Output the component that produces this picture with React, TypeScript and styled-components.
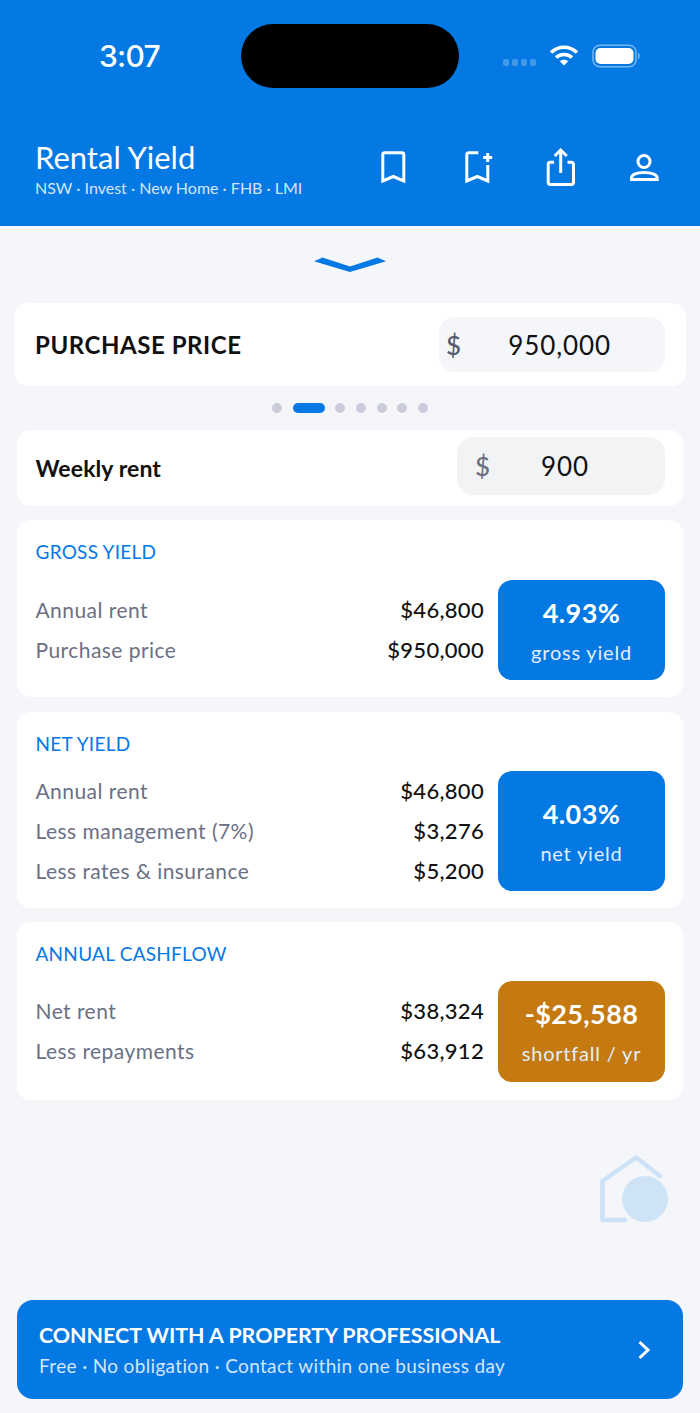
import React from "react";
import styled, { createGlobalStyle } from "styled-components";

const Global = createGlobalStyle`
  html, body { margin: 0; padding: 0; background: #f4f6fa; }
  body { font-family: "Lato", "Liberation Sans", sans-serif; }
  * { box-sizing: border-box; }
`;

const Page = styled.div`
  width: 700px;
  height: 1413px;
  background: #f4f6fa;
  display: flex;
  flex-direction: column;
  overflow: hidden;
`;
const Header = styled.header`
  height: 226px;
  flex: none;
  background: #0478e3;
  color: #fff;
  display: flex;
  flex-direction: column;
`;
const StatusBar = styled.div`
  height: 128px;
  padding: 24px 60px 0 99px;
  display: flex;
  align-items: flex-start;
`;
const Time = styled.div`
  width: 142px;
  height: 64px;
  line-height: 65px;
  font-size: 30px;
  font-weight: 500;
  font-family: "Inter", sans-serif;
  letter-spacing: -0.7px;
`;
const Island = styled.div`
  width: 218px;
  height: 64px;
  border-radius: 32px;
  background: #000;
`;
const StatusIcons = styled.div`
  margin-left: auto;
  height: 64px;
  display: flex;
  align-items: center;
  padding-bottom: 1px;
`;
const Signal = styled.div`
  display: flex;
  gap: 3px;
  margin: 14px 12px 0 0;
`;
const SignalDot = styled.span`
  width: 6px;
  height: 7px;
  border-radius: 2px;
  background: rgba(255, 255, 255, 0.25);
`;
const WifiSlot = styled.div`
  display: flex;
  margin-right: 12px;
`;
const TitleRow = styled.div`
  display: flex;
  align-items: flex-start;
  padding: 12px 41px 0 35px;
`;
const TitleBlock = styled.div`
  flex: 1;
`;
const Title = styled.div`
  font-size: 31px;
  line-height: 34px;
  font-weight: 400;
`;
const Subtitle = styled.div`
  font-size: 16px;
  line-height: 20px;
  margin-top: 4px;
  color: #d3e6fa;
`;
const Actions = styled.div`
  display: flex;
  gap: 53px;
  margin-top: 8px;
  align-items: flex-start;
`;
const ChevronWrap = styled.div`
  height: 77px;
  flex: none;
  display: flex;
  justify-content: center;
  padding-top: 31px;
`;
const Content = styled.main`
  display: flex;
  flex-direction: column;
  flex: 1;
`;
const PriceCard = styled.section`
  margin: 0 14px;
  height: 83px;
  background: #fff;
  border-radius: 14px;
  display: flex;
  align-items: center;
  padding: 0 21px;
`;
const PriceLabel = styled.div`
  flex: 1;
  font-size: 24px;
  font-weight: 700;
  color: #111;
  letter-spacing: 0.55px;
`;
const PriceInput = styled.div`
  width: 226px;
  height: 55px;
  border-radius: 16px;
  background: #f4f6fa;
  display: flex;
  align-items: center;
  padding: 0 54px 0 7px;
  font-size: 26px;
  color: #111;
`;
const Currency = styled.span<{ $color: string }>`
  color: ${(p) => p.$color};
  font-weight: 500;
`;
const InputValue = styled.span`
  margin-left: auto;
  letter-spacing: 0.9px;
`;
const Dots = styled.div`
  height: 44px;
  display: flex;
  align-items: center;
  justify-content: center;
  gap: 10.7px;
`;
const Dot = styled.span<{ $active?: boolean }>`
  width: ${(p) => (p.$active ? 32 : 10)}px;
  height: 10px;
  border-radius: 5px;
  background: ${(p) => (p.$active ? "#0478e3" : "#cbcbdc")};
`;
const Stack = styled.div`
  display: flex;
  flex-direction: column;
  margin: 0 17px;
`;
const RentCard = styled.section`
  height: 76px;
  background: #fff;
  border-radius: 14px;
  display: flex;
  align-items: flex-start;
  padding: 7px 18px 0 18.5px;
  margin-bottom: 14px;
`;
const RentLabel = styled.div`
  flex: 1;
  font-size: 23px;
  line-height: 63px;
  font-weight: 700;
  color: #111;
  letter-spacing: 0.1px;
`;
const RentInput = styled.div`
  width: 208px;
  height: 58px;
  background: #f2f3f4;
  border-radius: 16px;
  display: flex;
  align-items: center;
  padding: 0 76px 1px 18px;
  font-size: 26px;
  color: #111;
`;
const Card = styled.section<{ $height: number; $gap: number }>`
  height: ${(p) => p.$height}px;
  margin-bottom: ${(p) => p.$gap}px;
  background: #fff;
  border-radius: 14px;
  padding: 20px 18px 0 18.5px;
`;
const CardTitle = styled.div`
  font-size: 19px;
  line-height: 24px;
  color: #0478e3;
  letter-spacing: 0.25px;
`;
const CardBody = styled.div<{ $top: number }>`
  margin-top: ${(p) => p.$top}px;
  display: flex;
  align-items: flex-start;
  gap: 14px;
`;
const Rows = styled.div<{ $pad: number }>`
  flex: 1;
  padding-top: ${(p) => p.$pad}px;
  display: flex;
  flex-direction: column;
  gap: 10px;
`;
const Row = styled.div`
  height: 30px;
  display: flex;
  justify-content: space-between;
  align-items: center;
  font-size: 21px;
`;
const RowLabel = styled.span`
  color: #6b7085;
  letter-spacing: 0.45px;
`;
const RowValue = styled.span`
  color: #111;
  font-size: 22px;
  font-weight: 500;
  letter-spacing: 0.3px;
`;
const Result = styled.div<{ $height: number; $bg: string }>`
  width: 167px;
  height: ${(p) => p.$height}px;
  flex: none;
  border-radius: 14px;
  background: ${(p) => p.$bg};
  color: #fff;
  display: flex;
  flex-direction: column;
  align-items: center;
  justify-content: center;
  gap: 9px;
`;
const ResultValue = styled.div`
  font-size: 27px;
  line-height: 34px;
  font-weight: 700;
  letter-spacing: 0.4px;
`;
const ResultCaption = styled.div`
  font-size: 20px;
  line-height: 26px;
  color: #e2eefb;
  letter-spacing: 0.8px;
`;
const MarkWrap = styled.div`
  margin: 55px 32px 0 auto;
  width: 68px;
  height: 68px;
`;
const Cta = styled.section`
  margin: auto 17px 14px;
  height: 99px;
  border-radius: 16px;
  background: #0478e3;
  color: #fff;
  display: flex;
  align-items: center;
  padding: 0 32px 0 22px;
`;
const CtaText = styled.div`
  flex: 1;
`;
const CtaTitle = styled.div`
  font-size: 21.4px;
  line-height: 28px;
  font-weight: 700;
`;
const CtaSub = styled.div`
  margin-top: 5px;
  font-size: 19px;
  line-height: 24px;
  color: #d3e6fa;
  letter-spacing: 0.35px;
`;

const Wifi = () => (
  <svg width="32" height="24" viewBox="0 0 32 24" fill="none" stroke="#fff" strokeWidth="3.6">
    <path d="M3 8.5 C10.5 1.5 21.5 1.5 29 8.5" />
    <path d="M8 13.5 C12.5 9.5 19.5 9.5 24 13.5" />
    <path d="M16 21.5 L11.8 17.3 C14 15.3 18 15.3 20.2 17.3 Z" fill="#fff" stroke="none" />
  </svg>
);
const Battery = () => (
  <svg width="48" height="24" viewBox="0 0 48 24" fill="none">
    <rect x="1" y="1.2" width="43" height="21.6" rx="7" stroke="#fff" strokeOpacity=".45" strokeWidth="1.6" />
    <rect x="3.5" y="4" width="38" height="16" rx="5" fill="#fff" />
    <path d="M46 8.500 C47.200 9.500 47.800 10.500 47.800 12 C47.800 13.500 47.200 14.500 46 15.500 Z" fill="#fff" fillOpacity=".45" />
  </svg>
);
const iconProps = { fill: "none", stroke: "#fff", strokeWidth: 3 } as const;
const Bookmark = () => (
  <svg width="31" height="40" viewBox="0 0 31 40" {...iconProps}>
    <path d="M2.800 33 V6.500 C2.800 5.300 3.600 4.800 4.800 4.800 H21.800 C23 4.800 23.800 5.300 23.800 6.500 V33 L13.300 28.500 Z" />
  </svg>
);
const BookmarkPlus = () => (
  <svg width="29" height="40" viewBox="0 0 29 40" {...iconProps}>
    <path d="M14.300 4.800 H4.800 C3.600 4.800 2.800 5.300 2.800 6.500 V33 L13.300 28.500 L23.800 33 V17" />
    <path d="M23.700 5 V14 M19.200 9.500 H28.200" />
  </svg>
);
const Share = () => (
  <svg width="30" height="40" viewBox="0 0 30 40" {...iconProps}>
    <path d="M14.700 2 V25" />
    <path d="M8.700 8 L14.700 2 L20.700 8" />
    <path d="M8 14.300 H4.400 C3.100 14.300 2.200 15.200 2.200 16.500 V34.300 C2.200 35.600 3.100 36.500 4.400 36.500 H25.300 C26.600 36.500 27.500 35.600 27.500 34.300 V16.500 C27.500 15.200 26.600 14.300 25.300 14.300 H21.500" />
  </svg>
);
const Person = () => (
  <svg width="30" height="40" viewBox="0 0 30 40" {...iconProps}>
    <circle cx="15" cy="13.500" r="6" />
    <path d="M2.500 31.500 V30 C2.500 26.500 8 24.500 15 24.500 C22 24.500 28.200 26.500 28.200 30 V31.500 Z" />
  </svg>
);
const HouseMark = () => (
  <svg width="68" height="68" viewBox="0 0 68 68" fill="none">
    <path d="M25 65 H2.500 V26 L36 2.500 L60 21" stroke="#cde2f7" strokeWidth="4.500" strokeLinecap="round" strokeLinejoin="round" />
    <circle cx="45" cy="44" r="23" fill="#cfe3f7" />
  </svg>
);

type RowData = [string, string];

const YieldCard = ({
  title, rows, value, caption, height, gap, boxHeight, top, pad, bg,
}: {
  title: string; rows: RowData[]; value: string; caption: string; height: number;
  gap: number; boxHeight: number; top: number; pad: number; bg: string;
}) => (
  <Card $height={height} $gap={gap}>
    <CardTitle>{title}</CardTitle>
    <CardBody $top={top}>
      <Rows $pad={pad}>
        {rows.map(([l, v]) => (
          <Row key={l}>
            <RowLabel>{l}</RowLabel>
            <RowValue>{v}</RowValue>
          </Row>
        ))}
      </Rows>
      <Result $height={boxHeight} $bg={bg}>
        <ResultValue>{value}</ResultValue>
        <ResultCaption>{caption}</ResultCaption>
      </Result>
    </CardBody>
  </Card>
);

export default function App() {
  return (
    <Page>
      <Global />
      <Header>
        <StatusBar>
          <Time>3:07</Time>
          <Island />
          <StatusIcons>
            <Signal>
              {[0, 1, 2, 3].map((i) => <SignalDot key={i} />)}
            </Signal>
            <WifiSlot><Wifi /></WifiSlot>
            <Battery />
          </StatusIcons>
        </StatusBar>
        <TitleRow>
          <TitleBlock>
            <Title>Rental Yield</Title>
            <Subtitle>NSW · Invest · New Home · FHB · LMI</Subtitle>
          </TitleBlock>
          <Actions>
            <Bookmark />
            <BookmarkPlus />
            <Share />
            <Person />
          </Actions>
        </TitleRow>
      </Header>
      <ChevronWrap>
        <svg width="72" height="15" viewBox="0 0 72 15">
          <path d="M0 4.200 L8.500 0.500 L36 9.500 L63.500 0.500 L72 4.200 L36 15 Z" fill="#0478e3" />
        </svg>
      </ChevronWrap>
      <Content>
        <PriceCard>
          <PriceLabel>PURCHASE PRICE</PriceLabel>
          <PriceInput>
            <Currency $color="#555a6e">$</Currency>
            <InputValue>950,000</InputValue>
          </PriceInput>
        </PriceCard>
        <Dots>
          {[0, 1, 2, 3, 4, 5, 6].map((i) => <Dot key={i} $active={i === 1} />)}
        </Dots>
        <Stack>
          <RentCard>
            <RentLabel>Weekly rent</RentLabel>
            <RentInput>
              <Currency $color="#6b7085">$</Currency>
              <InputValue>900</InputValue>
            </RentInput>
          </RentCard>
          <YieldCard title="GROSS YIELD" height={177} gap={15} boxHeight={100} top={16} pad={14} bg="#0478e3"
            value="4.93%" caption="gross yield"
            rows={[["Annual rent", "$46,800"], ["Purchase price", "$950,000"]]} />
          <YieldCard title="NET YIELD" height={196} gap={14} boxHeight={120} top={15} pad={4} bg="#0478e3"
            value="4.03%" caption="net yield"
            rows={[["Annual rent", "$46,800"], ["Less management (7%)", "$3,276"], ["Less rates & insurance", "$5,200"]]} />
          <YieldCard title="ANNUAL CASHFLOW" height={178} gap={0} boxHeight={101} top={15} pad={14} bg="#c47a10"
            value="-$25,588" caption="shortfall / yr"
            rows={[["Net rent", "$38,324"], ["Less repayments", "$63,912"]]} />
        </Stack>
        <MarkWrap><HouseMark /></MarkWrap>
        <Cta>
          <CtaText>
            <CtaTitle>CONNECT WITH A PROPERTY PROFESSIONAL</CtaTitle>
            <CtaSub>Free · No obligation · Contact within one business day</CtaSub>
          </CtaText>
          <svg width="14" height="20" viewBox="0 0 14 20" fill="none" stroke="#fff" strokeWidth="3">
            <path d="M2.500 2 L11 10 L2.500 18" />
          </svg>
        </Cta>
      </Content>
    </Page>
  );
}
